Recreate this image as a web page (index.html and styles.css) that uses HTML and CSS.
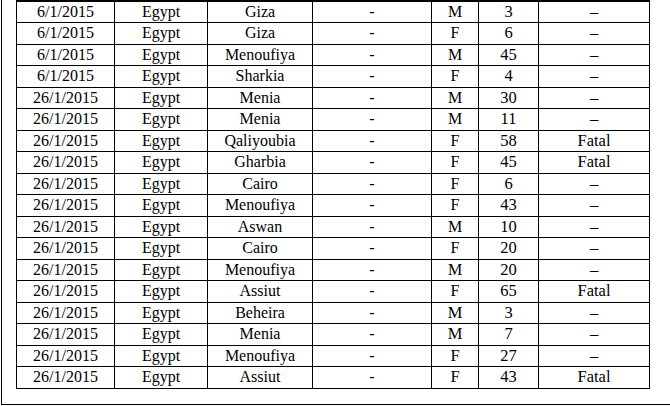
FILE: index.html
```html
<!DOCTYPE html>
<html>
<head>
<meta charset="utf-8">
<link rel="stylesheet" href="styles.css">
</head>
<body>
<div class="frame">
<table class="data">
<colgroup>
<col class="c1"><col class="c2"><col class="c3"><col class="c4"><col class="c5"><col class="c6"><col class="c7">
</colgroup>
<tbody>
<tr><td>6/1/2015</td><td>Egypt</td><td>Giza</td><td>-</td><td>M</td><td class="alt">3</td><td class="alt">–</td></tr>
<tr><td>6/1/2015</td><td>Egypt</td><td>Giza</td><td>-</td><td>F</td><td class="alt">6</td><td class="alt">–</td></tr>
<tr><td>6/1/2015</td><td>Egypt</td><td>Menoufiya</td><td>-</td><td>M</td><td class="alt">45</td><td class="alt">–</td></tr>
<tr><td>6/1/2015</td><td>Egypt</td><td>Sharkia</td><td>-</td><td>F</td><td class="alt">4</td><td class="alt">–</td></tr>
<tr><td>26/1/2015</td><td>Egypt</td><td>Menia</td><td>-</td><td>M</td><td class="alt">30</td><td class="alt">–</td></tr>
<tr><td>26/1/2015</td><td>Egypt</td><td>Menia</td><td>-</td><td>M</td><td class="alt">11</td><td class="alt">–</td></tr>
<tr><td>26/1/2015</td><td>Egypt</td><td>Qaliyoubia</td><td>-</td><td>F</td><td class="alt">58</td><td class="alt">Fatal</td></tr>
<tr><td>26/1/2015</td><td>Egypt</td><td>Gharbia</td><td>-</td><td>F</td><td class="alt">45</td><td class="alt">Fatal</td></tr>
<tr><td>26/1/2015</td><td>Egypt</td><td>Cairo</td><td>-</td><td>F</td><td class="alt">6</td><td class="alt">–</td></tr>
<tr><td>26/1/2015</td><td>Egypt</td><td>Menoufiya</td><td>-</td><td>F</td><td class="alt">43</td><td class="alt">–</td></tr>
<tr><td>26/1/2015</td><td>Egypt</td><td>Aswan</td><td>-</td><td>M</td><td class="alt">10</td><td class="alt">–</td></tr>
<tr><td>26/1/2015</td><td>Egypt</td><td>Cairo</td><td>-</td><td>F</td><td class="alt">20</td><td class="alt">–</td></tr>
<tr><td>26/1/2015</td><td>Egypt</td><td>Menoufiya</td><td>-</td><td>M</td><td class="alt">20</td><td class="alt">–</td></tr>
<tr><td>26/1/2015</td><td>Egypt</td><td>Assiut</td><td>-</td><td>F</td><td class="alt">65</td><td class="alt">Fatal</td></tr>
<tr><td>26/1/2015</td><td>Egypt</td><td>Beheira</td><td>-</td><td class="alt">M</td><td class="alt">3</td><td class="alt">–</td></tr>
<tr><td>26/1/2015</td><td>Egypt</td><td>Menia</td><td>-</td><td class="alt">M</td><td class="alt">7</td><td class="alt">–</td></tr>
<tr><td>26/1/2015</td><td>Egypt</td><td>Menoufiya</td><td>-</td><td class="alt">F</td><td class="alt">27</td><td class="alt">–</td></tr>
<tr><td>26/1/2015</td><td>Egypt</td><td>Assiut</td><td>-</td><td class="alt">F</td><td class="alt">43</td><td class="alt">Fatal</td></tr>
</tbody>
</table>
</div>
</body>
</html>
```
FILE: styles.css
```css
html, body {
  margin: 0;
  padding: 0;
  background: #ffffff;
}
body {
  width: 670px;
  height: 406px;
  overflow: hidden;
}
.frame {
  margin-left: 1px;
  width: 666px;
  height: 388px;
  border-left: 1px solid #000;
  border-right: 1px solid #000;
  border-bottom: 1px solid #000;
  padding: 0 0 16px 14px;
  box-sizing: content-box;
}
.data {
  border-collapse: collapse;
  table-layout: fixed;
  width: 634px;
  font-family: "Liberation Serif", "Times New Roman", serif;
  font-size: 16px;
  color: #000;
}
.c1 { width: 98px; }
.c2 { width: 93px; }
.c3 { width: 105px; }
.c4 { width: 119px; }
.c5 { width: 47px; }
.c6 { width: 60px; }
.c7 { width: 111px; }
.data td {
  border: 1px solid #000;
  height: 21.5px;
  padding: 0;
  text-align: center;
  vertical-align: middle;
  line-height: 18px;
  box-sizing: border-box;
}
.data tr:first-child td {
  border-top-width: 2px;
}
.data td.alt {
  font-size: 16.5px;
  transform: none;
}
```
